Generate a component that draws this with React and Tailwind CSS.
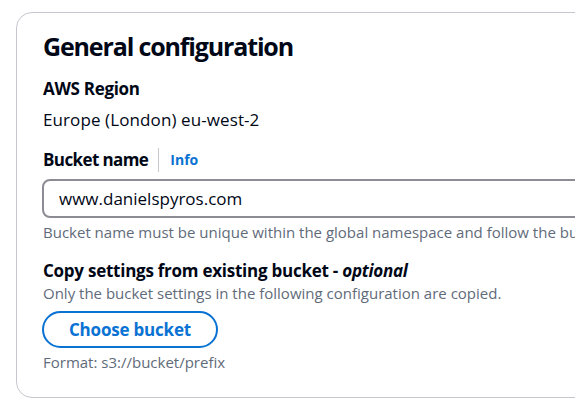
import React from 'react';

const GeneralConfiguration = () => {
  return (
    <div className="w-[575px] h-[411px] overflow-hidden bg-white font-['Open_Sans',sans-serif] text-[#000716]">
      <div className="ml-4 mt-3 w-[620px] rounded-2xl border border-[#c6c6cd] pl-[26px] pt-[18px] pb-[25px]">
        {/* Header */}
        <h2 className="text-[25px] leading-[30px] font-bold tracking-[-1.15px]">General configuration</h2>

        {/* Region */}
        <div className="mt-[17px]">
          <div className="text-[17px] leading-[22px] font-bold tracking-[-0.3px]">AWS Region</div>
          <div className="mt-[9px] text-[17px] leading-[22px] tracking-[0.1px]">Europe (London) eu-west-2</div>
        </div>

        {/* Bucket name */}
        <div className="mt-[17px]">
          <div className="flex items-center">
            <span className="text-[17px] leading-[22px] font-bold tracking-[-0.6px]">Bucket name</span>
            <span className="ml-[10px] mr-[11px] h-[24px] w-px bg-[#c6c6cd]" />
            <span className="text-[14px] leading-[22px] font-bold text-[#0972d3]">Info</span>
          </div>
          <div className="mt-[7px] -ml-px flex h-[39px] items-center rounded-lg border-2 border-[#8c8c94] pl-[15px] text-[17px]">
            www.danielspyros.com
          </div>
          <div className="mt-[4px] text-[15px] leading-[20px] text-[#5f6b7a] whitespace-nowrap">
            Bucket name must be unique within the global namespace and follow the bucket naming rules.
          </div>
        </div>

        {/* Copy settings */}
        <div className="mt-[18px]">
          <div className="text-[17px] leading-[22px] font-bold tracking-[-0.25px]">
            Copy settings from existing bucket - <i>optional</i>
          </div>
          <div className="mt-px text-[15px] leading-[20px] text-[#5f6b7a]">
            Only the bucket settings in the following configuration are copied.
          </div>
          <button className="mt-[8px] -ml-px flex h-[37px] w-[176px] items-center justify-center rounded-full border-2 border-[#0972d3] text-[17px] font-bold tracking-[-0.2px] text-[#0972d3]">
            Choose bucket
          </button>
          <div className="mt-[4px] text-[15px] leading-[20px] text-[#5f6b7a]">Format: s3://bucket/prefix</div>
        </div>
      </div>
    </div>
  );
};

export default GeneralConfiguration;
